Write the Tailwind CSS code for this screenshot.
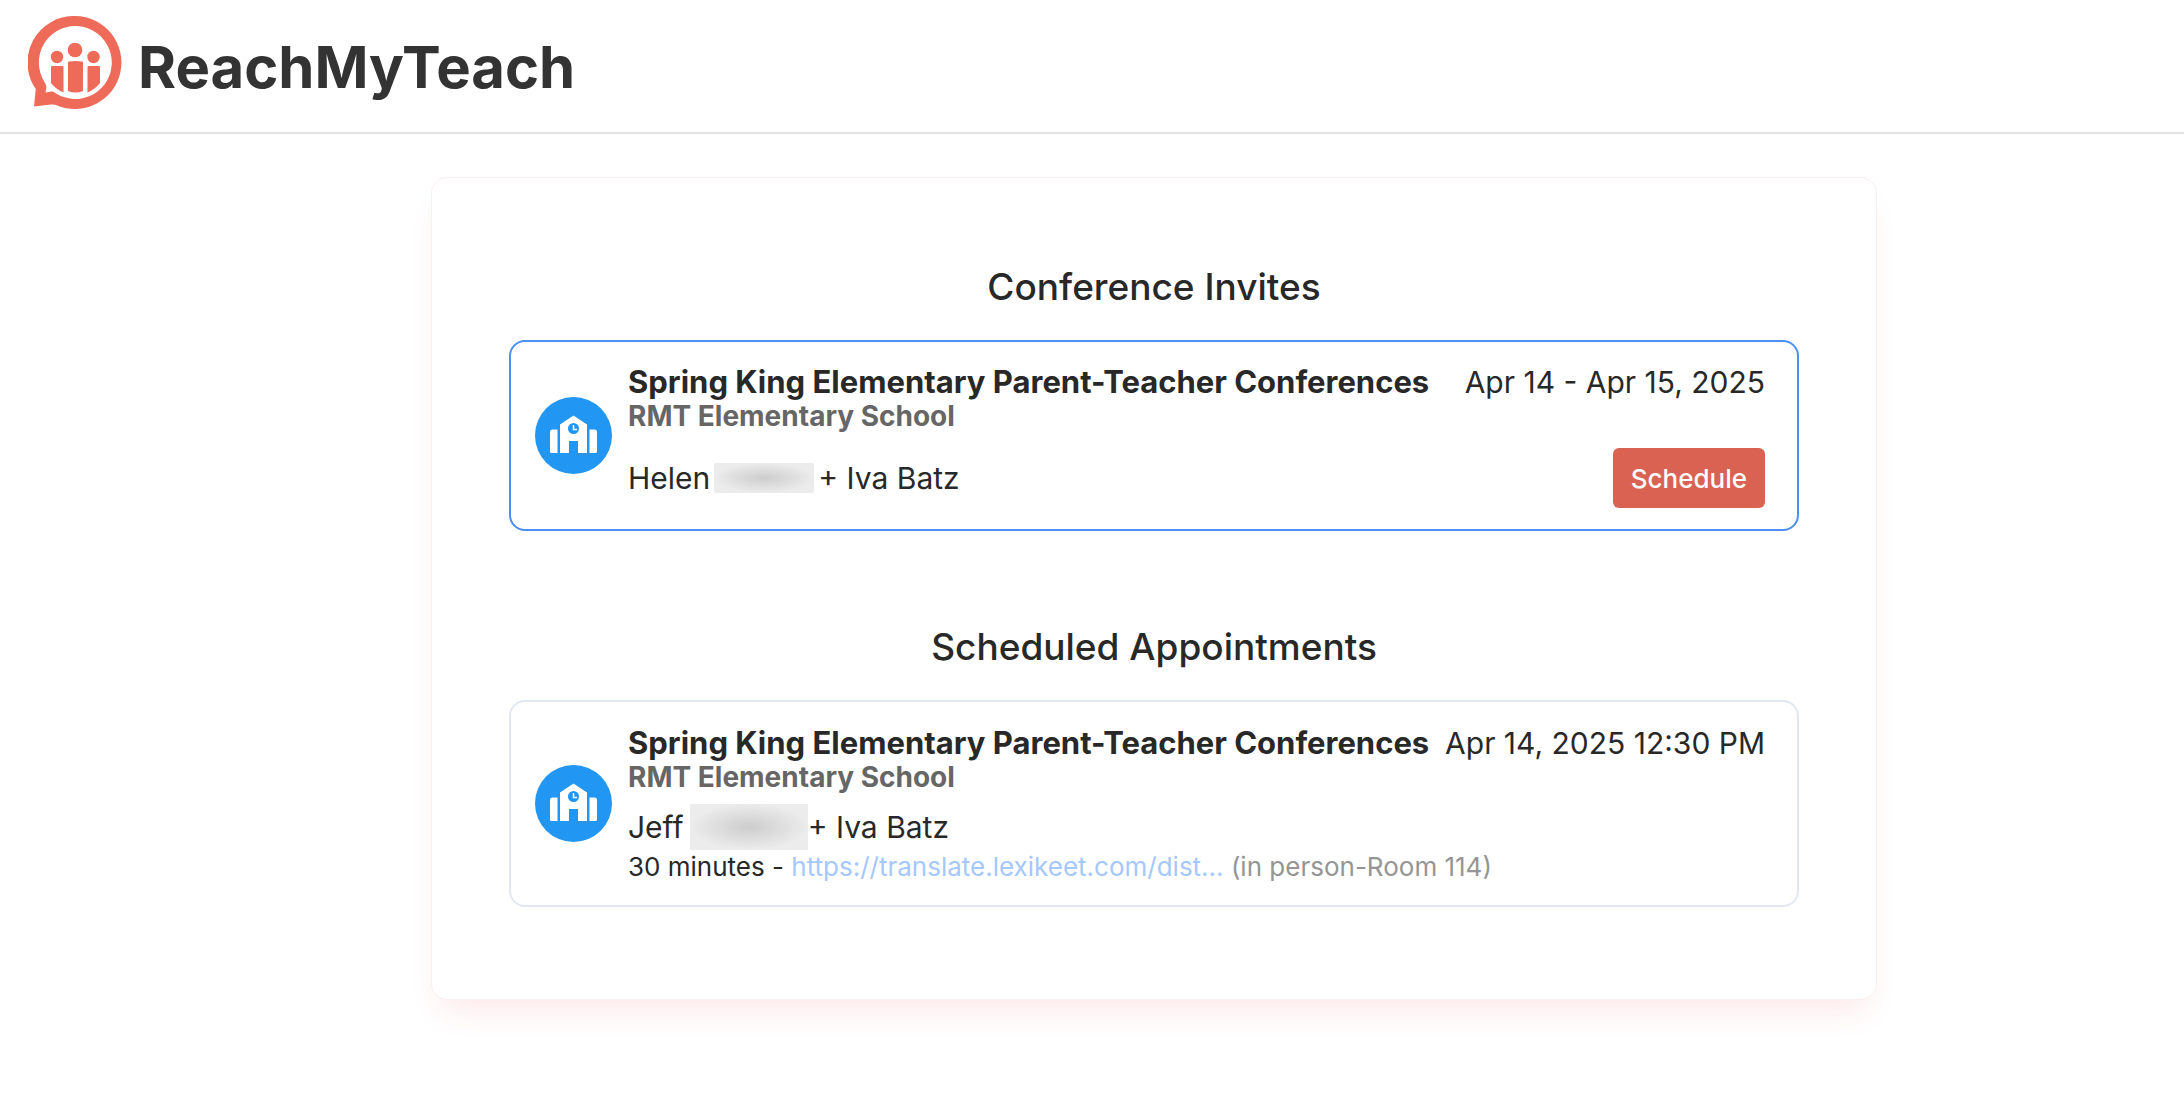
<!DOCTYPE html>
<html lang="en">
<head>
    <meta charset="UTF-8">
    <meta name="viewport" content="width=device-width, initial-scale=1.0">
    <title>ReachMyTeach - Conferences</title>
    <script src="https://cdn.jsdelivr.net/npm/@tailwindcss/browser@4"></script>
</head>
<body class="min-h-screen bg-white font-['Inter',sans-serif] text-[#282828]">
    <!-- Header -->
    <header class="border-b-2 border-[#e4e4e4] px-7 pt-4 pb-[22px]">
        <a href="#" class="inline-flex items-center gap-4 align-top text-[#333333]">
            <svg class="size-[94px]" viewBox="-1 0 94 94" fill="#ee6a59" aria-hidden="true">
                <path fill-rule="evenodd" d="M46.500 0a46.500 46.500 0 1 1-19 89.200c-2-.9-3.500-1-5.500-.6L5 90.500 6.800 73A46.500 46.500 0 0 1 46.500 0ZM46.500 10a36.500 36.500 0 0 0-31 56c1.700 3 2 4.500 1.700 6.500l-.7 4 4.500-.8c2.200-.3 3.500 0 6 1.800A36.500 36.500 0 1 0 46.500 10Z"/>
                <circle cx="46" cy="34" r="7.300"/>
                <circle cx="28" cy="41" r="6.200"/>
                <circle cx="64.500" cy="41" r="6.200"/>
                <path d="M40 45.500q6-1 13 0q1 0 1 1V75q-7.500 3-15 0V46.500q0-1 1-1Z"/>
                <path d="M22 51q0-1 1-1h10.500q1 0 1 1V76.500Q26.500 73 22 67Z"/>
                <path d="M71 51q0-1-1-1h-10.500q-1 0-1 1V76.500Q66.500 73 71 67Z"/>
            </svg>
            <span class="pt-2 text-[58px] leading-[60px] font-bold">ReachMyTeach</span>
        </a>
    </header>

    <!-- Main Content -->
    <main class="pt-[43px] pr-[307px] pb-16 pl-[431px]">
        <div class="rounded-2xl border border-[#fbeeee] px-[77px] pt-[83px] pb-[92px] shadow-[0_20px_32px_-10px_#ee2b2b1c]">
            <!-- Conference Invites -->
            <section>
                <h2 class="text-center text-[37px] leading-[52px] font-medium">Conference Invites</h2>
                <div class="mt-[27px] flex items-center gap-4 rounded-2xl border-2 border-[#4b8ff9] py-[18px] pr-8 pl-6">
                    <svg class="size-[77px] shrink-0" viewBox="0 0 77 77" aria-hidden="true">
                        <circle cx="38.500" cy="38.500" r="38.500" fill="#2196f3"/>
                        <path fill="#fff" d="M38.500 18.500 52 27.500V56H43V44H34V56H25V27.500ZM17.500 32.500H22.500V56H16.500Q15 56 15 54.500V35Q15 32.500 17.500 32.500ZM59.500 32.500H54.500V56H60.500Q62 56 62 54.500V35Q62 32.500 59.500 32.500Z"/>
                        <circle cx="38.500" cy="31.500" r="5.500" fill="#2196f3"/>
                        <path fill="none" stroke="#fff" stroke-width="1.500" d="M38.500 28V32.500H42"/>
                    </svg>
                    <div class="min-w-0 flex-1 pt-[5px] pb-[3px]">
                        <div class="flex justify-between whitespace-nowrap leading-[34px]">
                            <h3 class="text-[31px] font-bold">Spring King Elementary Parent-Teacher Conferences</h3>
                            <span class="text-[30px]">Apr 14 - Apr 15, 2025</span>
                        </div>
                        <p class="text-[28px] leading-[34px] font-bold text-[#666666]">RMT Elementary School</p>
                        <div class="mt-[15px] flex items-center justify-between">
                            <p class="flex items-center text-[30px] leading-[40px]">Helen <span class="mx-1 h-[30px] w-[100px] bg-[#ececec] bg-radial-[closest-side] from-[#cdcdcd] to-[#ececec]"></span> + Iva Batz</p>
                            <button type="button" class="h-[60px] rounded-md bg-[#da6252] px-[18px] text-[26px] font-medium text-white">Schedule</button>
                        </div>
                    </div>
                </div>
            </section>

            <!-- Scheduled Appointments -->
            <section class="mt-[90px]">
                <h2 class="text-center text-[37px] leading-[52px] font-medium">Scheduled Appointments</h2>
                <div class="mt-[27px] flex items-center gap-4 rounded-2xl border-2 border-[#e2e7f1] py-[18px] pr-8 pl-6">
                    <svg class="size-[77px] shrink-0" viewBox="0 0 77 77" aria-hidden="true">
                        <circle cx="38.500" cy="38.500" r="38.500" fill="#2196f3"/>
                        <path fill="#fff" d="M38.500 18.500 52 27.500V56H43V44H34V56H25V27.500ZM17.500 32.500H22.500V56H16.500Q15 56 15 54.500V35Q15 32.500 17.500 32.500ZM59.500 32.500H54.500V56H60.500Q62 56 62 54.500V35Q62 32.500 59.500 32.500Z"/>
                        <circle cx="38.500" cy="31.500" r="5.500" fill="#2196f3"/>
                        <path fill="none" stroke="#fff" stroke-width="1.500" d="M38.500 28V32.500H42"/>
                    </svg>
                    <div class="min-w-0 flex-1 pt-1.5">
                        <div class="flex justify-between whitespace-nowrap leading-[34px]">
                            <h3 class="text-[31px] font-bold">Spring King Elementary Parent-Teacher Conferences</h3>
                            <span class="text-[30px]">Apr 14, 2025 12:30 PM</span>
                        </div>
                        <p class="text-[28px] leading-[34px] font-bold text-[#666666]">RMT Elementary School</p>
                        <p class="mt-[13px] flex h-[40px] items-center text-[30px] leading-[40px]">Jeff <span class="ml-1.5 h-[46px] w-[118px] bg-[#ececec] bg-radial-[closest-side] from-[#cdcdcd] to-[#ececec]"></span> + Iva Batz</p>
                        <p class="text-[26px] leading-[40px]">30 minutes - <a href="#" class="text-[#a5c8ff]">https://translate.lexikeet.com/dist...</a> <span class="text-[#959595]">(in person-Room 114)</span></p>
                    </div>
                </div>
            </section>
        </div>
    </main>
</body>
</html>
